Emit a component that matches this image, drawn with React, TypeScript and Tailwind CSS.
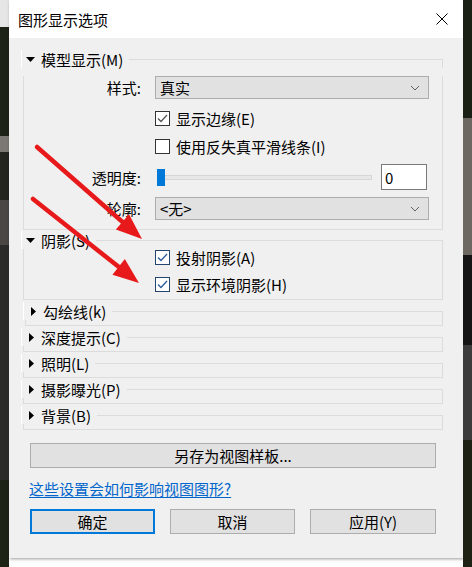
import React from "react";

const font = "font-['Noto_Sans_CJK_SC','Noto_Sans',sans-serif]";

function Arrow({ x1, y1, x2, y2 }: { x1: number; y1: number; x2: number; y2: number }) {
  const dx = x2 - x1;
  const dy = y2 - y1;
  const len = Math.hypot(dx, dy);
  const ux = dx / len;
  const uy = dy / len;
  const L = 26;
  const W = 10;
  const bx = x2 - ux * L;
  const by = y2 - uy * L;
  const pts = `${x2},${y2} ${bx - uy * W},${by + ux * W} ${bx + uy * W},${by - ux * W}`;
  return (
    <g>
      <line x1={x1} y1={y1} x2={bx + ux * 2} y2={by + uy * 2} stroke="#e8191a" strokeWidth={4.5} strokeLinecap="round" />
      <polygon points={pts} fill="#e8191a" />
    </g>
  );
}

function Triangle({ open }: { open: boolean }) {
  return open ? (
    <svg width="9" height="5" viewBox="0 0 9 5" className="ml-[4px] mr-[6px]">
      <polygon points="0,0 9,0 4.5,5" fill="#000" />
    </svg>
  ) : (
    <svg width="5" height="9" viewBox="0 0 5 9" className="ml-[7px] mr-[7px]">
      <polygon points="0,0 5,4.5 0,9" fill="#000" />
    </svg>
  );
}

function GroupHeader({ open, label }: { open: boolean; label: string }) {
  return (
    <div className="flex h-[18px]">
      <div className="flex items-center border-l border-white bg-[#f0f0f0] pr-[6px]">
        <Triangle open={open} />
        <span className="leading-none">{label}</span>
      </div>
      <div className="h-[9px] flex-1 self-end border-t border-r border-[#dcdcdc]" />
    </div>
  );
}

function Chevron() {
  return (
    <svg width="10" height="6" viewBox="0 0 10 6">
      <polyline points="1,1 5,5 9,1" fill="none" stroke="#606060" strokeWidth="1" />
    </svg>
  );
}

function Select({ value }: { value: string }) {
  return (
    <div className="flex h-[23px] w-[274px] items-center justify-between border border-[#adadad] bg-[#e1e1e1] pl-[4px] pr-[8px]">
      <span className="leading-none">{value}</span>
      <Chevron />
    </div>
  );
}

function Check({ checked, blue, label }: { checked: boolean; blue?: boolean; label: string }) {
  return (
    <div className="flex items-center">
      <span
        className={`flex h-[15px] w-[15px] items-center justify-center border bg-white ${
          blue ? "border-[#24466e]" : "border-[#333333]"
        }`}
      >
        {checked && (
          <svg width="11" height="9" viewBox="0 0 11 9">
            <polyline
              points="1,4.5 4,7.5 10,1"
              fill="none"
              stroke={blue ? "#2c5d9c" : "#555555"}
              strokeWidth="1.3"
            />
          </svg>
        )}
      </span>
      <span className="ml-[6px] leading-none">{label}</span>
    </div>
  );
}

function Row({ label, children, className }: { label?: string; children: React.ReactNode; className: string }) {
  return (
    <div className={`flex items-center ${className}`}>
      <div className="w-[117px] text-right leading-none">{label}</div>
      <div className="ml-[14px] flex items-center">{children}</div>
    </div>
  );
}

function Collapsed({ label, shift }: { label: string; shift?: boolean }) {
  return (
    <div className={`mt-[2px] ${shift ? "ml-[2px]" : ""}`}>
      <GroupHeader open={false} label={label} />
      <div className="ml-[2px] h-[6px] border-x border-b border-[#dcdcdc]" />
    </div>
  );
}

function Button({ children, primary, className }: { children: React.ReactNode; primary?: boolean; className: string }) {
  return (
    <div
      className={`flex h-[25px] items-center justify-center bg-[#e1e1e1] leading-none ${
        primary ? "border-2 border-[#0078d7]" : "border border-[#adadad]"
      } ${className}`}
    >
      {children}
    </div>
  );
}

export default function App() {
  return (
    <div className={`relative flex h-[567px] w-[472px] overflow-hidden text-[15px] text-black ${font}`}>
      {/* scene behind the dialog */}
      <div className="h-full w-[9px] bg-[linear-gradient(to_bottom,#e6e6e6_0px,#e6e6e6_27px,#1e2318_27px,#1e2318_136px,#7b7873_136px,#7b7873_152px,#23241f_152px,#23241f_200px,#4a4744_200px,#4a4744_245px,#2b2b2a_245px,#2b2b2a_480px,#1d2315_480px)]" />

      <div className="flex h-[558px] w-[454px] flex-col bg-[#f0f0f0] shadow-[1px_1px_3px_rgba(0,0,0,0.4)]">
        {/* title bar */}
        <div className="flex h-[38px] shrink-0 items-center justify-between bg-white pl-[9px] pr-[15px]">
          <span className="leading-none">图形显示选项</span>
          <svg width="12" height="12" viewBox="0 0 12 12">
            <path d="M0.5 0.5 L11.5 11.5 M11.5 0.5 L0.5 11.5" stroke="#000" strokeWidth="1" />
          </svg>
        </div>

        <div className="flex flex-col pl-[12px] pr-[20px] pt-[12px]">
          {/* 模型显示 */}
          <div>
            <GroupHeader open label="模型显示(M)" />
            <div className="ml-[2px] border-x border-b border-[#dcdcdc] pb-[9px]">
              <Row label="样式:" className="mt-[8px] h-[23px]">
                <Select value="真实" />
              </Row>
              <Row className="mt-[5px] h-[28px]">
                <Check checked label="显示边缘(E)" />
              </Row>
              <Row className="h-[28px]">
                <Check checked={false} label="使用反失真平滑线条(I)" />
              </Row>
              <Row label="透明度:" className="mt-[4px] h-[26px]">
                <div className="relative ml-[2px] flex h-[17px] w-[215px] items-center">
                  <div className="h-[5px] w-full border border-[#d6d6d6] bg-[#e7e7e7]" />
                  <div className="absolute left-0 top-0 h-[17px] w-[8px] bg-[#0078d7]" />
                </div>
                <div className="ml-[9px] flex h-[26px] w-[46px] items-center border border-[#7a7a7a] bg-white pl-[3px] leading-none">
                  0
                </div>
              </Row>
              <Row label="轮廓:" className="mt-[7px] h-[23px]">
                <Select value="<无>" />
              </Row>
            </div>
          </div>

          {/* 阴影 */}
          <div className="mt-[1px]">
            <GroupHeader open label="阴影(S)" />
            <div className="ml-[2px] border-x border-b border-[#dcdcdc] pb-[7px]">
              <Row className="h-[16px]">
                <Check checked blue label="投射阴影(A)" />
              </Row>
              <Row className="mt-[11px] h-[16px]">
                <Check checked blue label="显示环境阴影(H)" />
              </Row>
            </div>
          </div>

          <Collapsed label="勾绘线(k)" shift />
          <Collapsed label="深度提示(C)" />
          <Collapsed label="照明(L)" />
          <Collapsed label="摄影曝光(P)" />
          <Collapsed label="背景(B)" />

          <Button className="ml-[9px] mt-[13px] w-[406px]">另存为视图样板...</Button>

          <div className="ml-[8px] mt-[10px] flex h-[20px] items-center">
            <span className="leading-none text-[#0066cc] underline underline-offset-2">这些设置会如何影响视图图形?</span>
          </div>

          <div className="ml-[9px] mt-[11px] flex">
            <Button primary className="w-[125px]">确定</Button>
            <Button className="ml-[15px] w-[125px]">取消</Button>
            <Button className="ml-[15px] w-[126px]">应用(Y)</Button>
          </div>
        </div>
      </div>

      <div className="h-full w-[9px] bg-[linear-gradient(to_bottom,#1b2015_0px,#1b2015_118px,#6e6862_118px,#6e6862_255px,#151515_255px,#151515_345px,#3c3c3c_345px,#3c3c3c_440px,#1d2214_440px)]" />

      {/* red annotation arrows */}
      <svg className="pointer-events-none absolute left-0 top-0" width="472" height="567">
        <Arrow x1={37} y1={147} x2={142} y2={239} />
        <Arrow x1={33} y1={199} x2={139} y2={283} />
      </svg>
    </div>
  );
}
